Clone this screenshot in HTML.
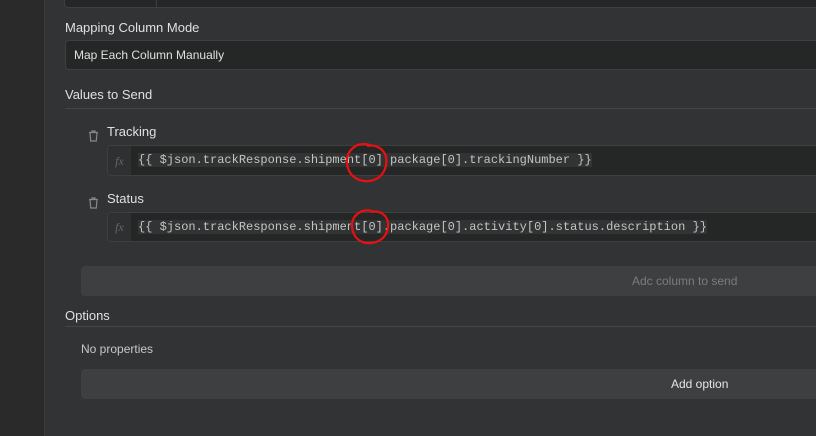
<!DOCTYPE html>
<html><head><style>
body{margin:0;width:816px;height:436px;background:#323335;font-family:"Liberation Sans",sans-serif;position:relative;overflow:hidden;color:#dcdcdc}
.a{position:absolute}
.side{left:0;top:0;width:44px;height:436px;background:#2a2a2a;border-right:1px solid #3c3c3e}
.inp{background:#252626;border:1px solid #3e3f41;border-radius:4px;box-sizing:border-box}
.lbl{font-size:13px;color:#e0e0e0}
.code{font-family:"Liberation Mono",monospace;font-size:12px;color:#c4c4c4}
.code span{background:#323334}
.fx{background:#2f3032;width:23px;color:#666;font-style:italic;font-family:"Liberation Serif",serif;font-size:12px;text-align:center;line-height:30px;border-radius:4px 0 0 4px}
.btn{background:#3e3f41;border-radius:4px;font-size:12px;text-align:center;line-height:30px}
.line{height:1px;background:#444547}
</style></head><body>
<div class="a side"></div>
<div class="a inp" style="left:64px;top:-10px;width:760px;height:18px;border-radius:4px"></div>
<div class="a" style="left:156px;top:0;width:1px;height:7px;background:#3e3f41"></div>
<div class="a lbl" style="left:65px;top:20px">Mapping Column Mode</div>
<div class="a inp" style="left:65px;top:40px;width:760px;height:30px;font-size:12px;line-height:28px;padding-left:8px;color:#e0e0e0">Map Each Column Manually</div>
<div class="a lbl" style="left:65px;top:87px">Values to Send</div>
<div class="a line" style="left:65px;top:108px;width:751px"></div>

<svg class="a" style="left:88px;top:130px" width="11" height="12" viewBox="0 0 11 12"><path d="M1 2.5h9M4 2.5V1h3v1.5M2 2.5l.7 8.5h5.6L9 2.5" fill="none" stroke="#888" stroke-width="1.2"/></svg>
<div class="a lbl" style="left:107px;top:124px">Tracking</div>
<div class="a inp" style="left:107px;top:145px;width:720px;height:31px;overflow:hidden">
<div class="a fx" style="left:0;top:0;height:30px">fx</div>
<div class="a code" style="left:30px;top:7px;white-space:pre"><span>{{ $json.trackResponse.shipment[0].package[0].trackingNumber }}</span></div></div>

<svg class="a" style="left:88px;top:197px" width="11" height="12" viewBox="0 0 11 12"><path d="M1 2.5h9M4 2.5V1h3v1.5M2 2.5l.7 8.5h5.6L9 2.5" fill="none" stroke="#888" stroke-width="1.2"/></svg>
<div class="a lbl" style="left:107px;top:191px">Status</div>
<div class="a inp" style="left:107px;top:212px;width:720px;height:30px;overflow:hidden">
<div class="a fx" style="left:0;top:0;height:29px;line-height:29px">fx</div>
<div class="a code" style="left:30px;top:7px;white-space:pre"><span>{{ $json.trackResponse.shipment[0].package[0].activity[0].status.description }}</span></div></div>

<div class="a btn" style="left:81px;top:266px;width:740px;height:30px;color:#7b7c7e;padding-left:551px;box-sizing:border-box;text-align:left">Adc column to send</div>
<div class="a lbl" style="left:65px;top:308px">Options</div>
<div class="a line" style="left:65px;top:326px;width:751px"></div>
<div class="a" style="left:81px;top:342px;font-size:12px;color:#c8c8c8">No properties</div>
<div class="a btn" style="left:81px;top:369px;width:740px;height:30px;color:#e6e6e6;padding-left:590px;box-sizing:border-box;text-align:left">Add option</div>

<svg class="a" style="left:0;top:0" width="816" height="436">
<path d="M370 145c-14-4-24 6-23 18 1 12 10 19 22 18 12-1 19-12 17-24-2-8-10-13-19-11" fill="none" stroke="#e81010" stroke-width="2.2"/>
<path d="M372 211c-12-3-21 6-20 16 1 11 9 17 19 16 11-1 18-9 17-20-1-8-8-13-17-11" fill="none" stroke="#e81010" stroke-width="2.2"/>
</svg>
</body></html>
